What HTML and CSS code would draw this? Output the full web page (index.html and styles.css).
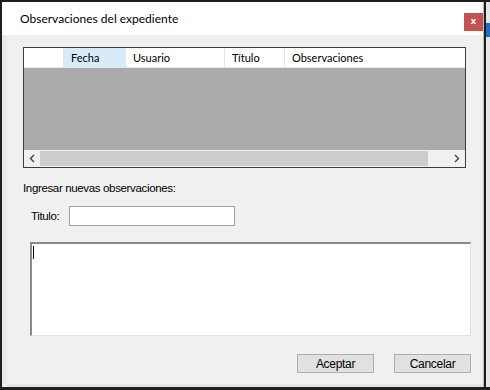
FILE: index.html
```html
<!DOCTYPE html>
<html lang="es">
<head>
    <meta charset="UTF-8">
    <title>Observaciones del expediente</title>
    <link rel="stylesheet" href="styles.css">
</head>
<body>
<div class="screen">
    <div class="win">
        <div class="titlebar">
            <span class="title">Observaciones del expediente</span>
            <span class="close">x</span>
        </div>
        <div class="body">
            <div class="behind"></div>
            <div class="content">
                <div class="grid">
                    <div class="grid-head">
                        <div class="cell rowhead"></div>
                        <div class="cell col-fecha">Fecha</div>
                        <div class="cell col-usuario">Usuario</div>
                        <div class="cell col-titulo">Título</div>
                        <div class="cell col-obs">Observaciones</div>
                    </div>
                    <div class="grid-rows"></div>
                    <div class="hscroll">
                        <div class="arrow">
                            <svg width="6" height="9" viewBox="0 0 6 9"><path d="M5 1 L1.5 4.5 L5 8" fill="none" stroke="#404040" stroke-width="1.4"/></svg>
                        </div>
                        <div class="track"><div class="thumb"></div></div>
                        <div class="arrow">
                            <svg width="6" height="9" viewBox="0 0 6 9"><path d="M1 1 L4.5 4.5 L1 8" fill="none" stroke="#404040" stroke-width="1.4"/></svg>
                        </div>
                    </div>
                </div>

                <div class="label">Ingresar nuevas observaciones:</div>

                <div class="titulo-row">
                    <span class="label">Titulo:</span>
                    <div class="textbox"></div>
                </div>

                <div class="memo"><span class="caret"></span></div>

                <div class="buttons">
                    <button class="btn">Aceptar</button>
                    <button class="btn">Cancelar</button>
                </div>
            </div>
        </div>
    </div>
    <div class="edge"><div class="edge-blue"></div></div>
</div>
</body>
</html>
```

FILE: styles.css
```css
html, body {
    margin: 0;
    padding: 0;
}
body {
    background: #1e1e1e;
}
.screen {
    width: 490px;
    height: 390px;
    box-sizing: border-box;
    padding: 2px 0 3px 2px;
    background: #1e1e1e;
    display: flex;
}
.win {
    width: 483px;
    display: flex;
    flex-direction: column;
    background: #f0f0f0;
    border-right: 1px solid #b9b9b9;
}
.titlebar {
    height: 33px;
    background: #fff;
    display: flex;
    align-items: center;
    justify-content: space-between;
    padding: 0 0 0 18px;
    box-sizing: border-box;
}
.title {
    font-family: Lato, sans-serif;
    font-size: 12px;
    color: #000;
    margin-top: -1px;
}
.close {
    width: 19px;
    height: 18px;
    background: #c75050;
    color: #fff;
    font-family: "DejaVu Sans", sans-serif;
    font-weight: bold;
    font-size: 9px;
    line-height: 17px;
    text-align: center;
    margin-top: 7px;
}
.body {
    flex: 1;
    display: flex;
}
.behind {
    width: 5px;
    background: #e9e9e9;
    border-bottom: 3px solid #f0f0f0;
}
.content {
    flex: 1;
    padding: 12px 12px 0 16px;
    font-family: "Liberation Sans", sans-serif;
    font-size: 11.5px;
    color: #000;
    border-bottom: 3px solid #e3e3e3;
}
.grid {
    height: 121px;
    box-sizing: border-box;
    border: 1px solid #3c3c3c;
    margin-right: 5px;
    display: flex;
    flex-direction: column;
    background: #fff;
}
.grid-head {
    height: 20px;
    display: flex;
    border-bottom: 1px solid #e5e5e5;
    box-sizing: border-box;
}
.cell {
    font-family: Lato, sans-serif;
    font-size: 11px;
    line-height: 19px;
    padding-left: 7px;
    border-right: 1px solid #e5e5e5;
    box-sizing: border-box;
}
.rowhead { width: 40px; padding: 0; }
.col-fecha { width: 62px; background: #d9ebf9; border-right-color: #d9ebf9; }
.col-usuario { width: 99px; }
.col-titulo { width: 60px; }
.col-obs { flex: 1; border-right: none; }
.grid-rows {
    flex: 1;
    background: #ababab;
}
.hscroll {
    height: 17px;
    display: flex;
    background: #f0f0f0;
}
.arrow {
    width: 16px;
    display: flex;
    align-items: center;
    justify-content: center;
}
.track {
    flex: 1;
    display: flex;
    align-items: stretch;
    padding: 1px 0;
}
.thumb {
    width: 388px;
    background: #cdcdcd;
}
.label {
    margin-top: 12px;
    line-height: 16px;
    letter-spacing: -0.35px;
}
.titulo-row {
    display: flex;
    align-items: center;
    margin-top: 10px;
    padding-left: 8px;
}
.titulo-row .label {
    margin: 0;
    width: 38px;
}
.textbox {
    width: 166px;
    height: 20px;
    box-sizing: border-box;
    border: 1px solid #a0a0a0;
    background: #fff;
}
.memo {
    margin: 16px 0 0 7px;
    height: 94px;
    box-sizing: border-box;
    background: #fff;
    border-top: 2px solid #8a8a8a;
    border-left: 2px solid #8a8a8a;
    border-right: 1px solid #e3e3e3;
    border-bottom: 1px solid #e3e3e3;
    padding: 2px 0 0 1px;
}
.caret {
    display: block;
    width: 1px;
    height: 13px;
    background: #000;
}
.buttons {
    display: flex;
    justify-content: flex-end;
    gap: 20px;
    margin-top: 18px;
}
.btn {
    width: 77px;
    height: 19px;
    padding: 0;
    background: #e1e1e1;
    border: 1px solid #adadad;
    font-family: "Liberation Sans", sans-serif;
    font-size: 12px;
    letter-spacing: -0.3px;
    color: #000;
}
.edge {
    width: 4px;
    border-left: 2px solid #1e1e1e;
    background: #e6e6e6;
    padding-top: 21px;
}
.edge-blue {
    height: 14px;
    background: #1f6fc5;
}
```
